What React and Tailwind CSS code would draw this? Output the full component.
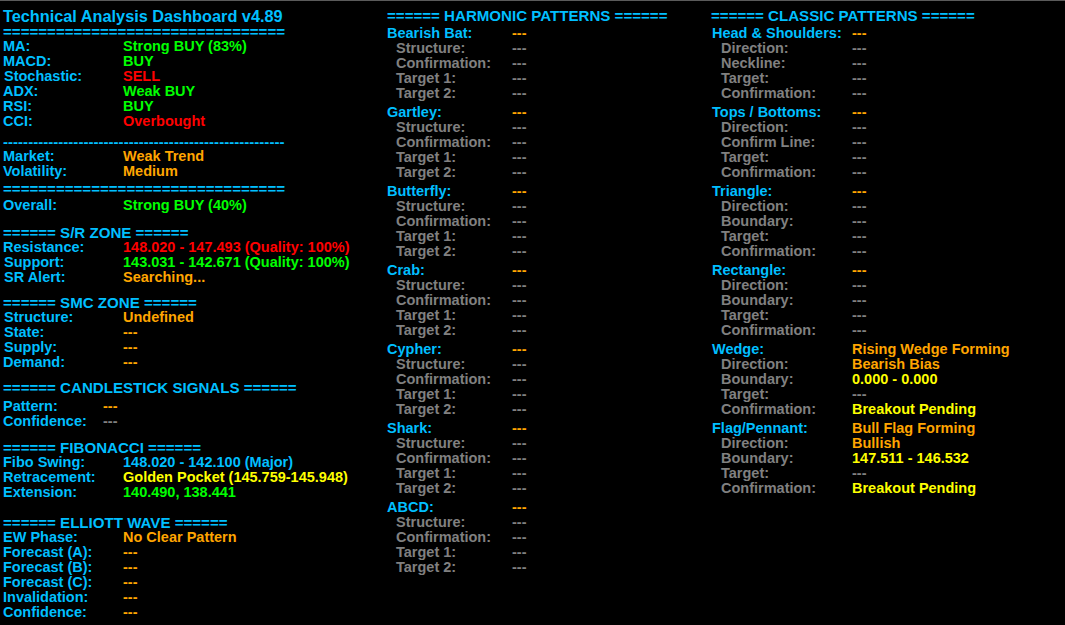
import React from 'react';

const CYAN = 'text-[#00bfff]';
const GRAY = 'text-[#808080]';
const ORANGE = 'text-[#ffa500]';
const GREEN = 'text-[#00ff00]';
const RED = 'text-[#ff0000]';
const YELLOW = 'text-[#ffff00]';

const font = { fontFamily: '"Liberation Sans", Arial, sans-serif' };

const Header = ({ text, className = '' }) => (
  <div className={`h-[15px] leading-[15px] text-[15.1px] font-bold whitespace-nowrap ${CYAN} ${className}`}>{text}</div>
);

const Row = ({ label, value, color = ORANGE, labelW = 'w-[120px]', shift = false, className = '' }) => (
  <div className={`flex h-[15px] leading-[15px] text-[14.5px] font-bold whitespace-nowrap ${className}`}>
    <span className={`${labelW} shrink-0 ${CYAN} ${shift ? 'pl-px' : ''}`}>{label}</span>
    <span className={color}>{value}</span>
  </div>
);

const EQ = '='.repeat(32);
const DASH = '-'.repeat(56);

const harmonic = ['Bearish Bat:', 'Gartley:', 'Butterfly:', 'Crab:', 'Cypher:', 'Shark:', 'ABCD:'];
const harmonicSubs = ['Structure:', 'Confirmation:', 'Target 1:', 'Target 2:'];

const classic = [
  { name: 'Head & Shoulders:', value: '---', color: ORANGE, subs: [['Direction:', '---', GRAY], ['Neckline:', '---', GRAY], ['Target:', '---', GRAY], ['Confirmation:', '---', GRAY]] },
  { name: 'Tops / Bottoms:', value: '---', color: ORANGE, subs: [['Direction:', '---', GRAY], ['Confirm Line:', '---', GRAY], ['Target:', '---', GRAY], ['Confirmation:', '---', GRAY]] },
  { name: 'Triangle:', value: '---', color: ORANGE, subs: [['Direction:', '---', GRAY], ['Boundary:', '---', GRAY], ['Target:', '---', GRAY], ['Confirmation:', '---', GRAY]] },
  { name: 'Rectangle:', value: '---', color: ORANGE, subs: [['Direction:', '---', GRAY], ['Boundary:', '---', GRAY], ['Target:', '---', GRAY], ['Confirmation:', '---', GRAY]] },
  { name: 'Wedge:', value: 'Rising Wedge Forming', color: ORANGE, subs: [['Direction:', 'Bearish Bias', ORANGE], ['Boundary:', '0.000 - 0.000', YELLOW], ['Target:', '---', GRAY], ['Confirmation:', 'Breakout Pending', YELLOW]] },
  { name: 'Flag/Pennant:', value: 'Bull Flag Forming', color: ORANGE, subs: [['Direction:', 'Bullish', ORANGE], ['Boundary:', '147.511 - 146.532', YELLOW], ['Target:', '---', GRAY], ['Confirmation:', 'Breakout Pending', YELLOW]] },
];

const PatternGroup = ({ name, value, color, subs, nameW, subW, first }) => (
  <div className={first ? 'mt-[3px]' : 'mt-[4px]'}>
    <div className="flex h-[15px] leading-[15px] text-[14.5px] font-bold whitespace-nowrap">
      <span className={`${nameW} shrink-0 ${CYAN}`}>{name}</span>
      <span className={color}>{value}</span>
    </div>
    {subs.map(([l, v, c]) => (
      <div key={l} className="flex h-[15px] leading-[15px] text-[14.5px] font-bold whitespace-nowrap pl-[9px]">
        <span className={`${subW} shrink-0 ${GRAY}`}>{l}</span>
        <span className={c}>{v}</span>
      </div>
    ))}
  </div>
);

export default function App() {
  return (
    <div style={font} className="w-full h-[625px] bg-black border-t border-[#5a5a5a] overflow-hidden flex">
      {/* left column */}
      <div className="w-[387px] shrink-0 pl-[3px] pt-[6px] flex flex-col">
        <div className={`h-[18px] leading-[18px] text-[16.3px] font-bold whitespace-nowrap ${CYAN}`}>Technical Analysis Dashboard v4.89</div>
        <Header text={EQ} className="-mt-px" />
        <Row label="MA:" value="Strong BUY (83%)" color={GREEN} />
        <Row label="MACD:" value="BUY" color={GREEN} />
        <Row label="Stochastic:" value="SELL" color={RED} shift />
        <Row label="ADX:" value="Weak BUY" color={GREEN} />
        <Row label="RSI:" value="BUY" color={GREEN} />
        <Row label="CCI:" value="Overbought" color={RED} />
        <Header text={DASH} className="mt-[5px]" />
        <Row label="Market:" value="Weak Trend" />
        <Row label="Volatility:" value="Medium" />
        <Header text={EQ} className="mt-[2px]" />
        <Row label="Overall:" value="Strong BUY (40%)" color={GREEN} className="mt-[2px]" />

        <Header text="====== S/R ZONE ======" className="mt-[12px]" />
        <Row label="Resistance:" value="148.020 - 147.493 (Quality: 100%)" color={RED} />
        <Row label="Support:" value="143.031 - 142.671 (Quality: 100%)" color={GREEN} shift />
        <Row label="SR Alert:" value="Searching..." shift />

        <Header text="====== SMC ZONE ======" className="mt-[10px]" />
        <Row label="Structure:" value="Undefined" shift />
        <Row label="State:" value="---" shift />
        <Row label="Supply:" value="---" shift />
        <Row label="Demand:" value="---" />

        <Header text="====== CANDLESTICK SIGNALS ======" className="mt-[10px]" />
        <Row label="Pattern:" value="---" labelW="w-[100px]" className="mt-[4px]" />
        <Row label="Confidence:" value="---" color={GRAY} labelW="w-[100px]" />

        <Header text="====== FIBONACCI ======" className="mt-[11px]" />
        <Row label="Fibo Swing:" value="148.020 - 142.100 (Major)" color={CYAN} />
        <Row label="Retracement:" value="Golden Pocket (145.759-145.948)" color={YELLOW} />
        <Row label="Extension:" value="140.490, 138.441" color={GREEN} />

        <Header text="====== ELLIOTT WAVE ======" className="mt-[15px]" />
        <Row label="EW Phase:" value="No Clear Pattern" />
        <Row label="Forecast (A):" value="---" />
        <Row label="Forecast (B):" value="---" />
        <Row label="Forecast (C):" value="---" />
        <Row label="Invalidation:" value="---" />
        <Row label="Confidence:" value="---" />
      </div>

      {/* harmonic column */}
      <div className="w-[324px] shrink-0 pt-[7px] flex flex-col">
        <Header text="====== HARMONIC PATTERNS ======" />
        {harmonic.map((h, i) => (
          <PatternGroup
            key={h}
            first={i === 0}
            name={h}
            value="---"
            color={ORANGE}
            subs={harmonicSubs.map((s) => [s, '---', GRAY])}
            nameW="w-[125px]"
            subW="w-[116px]"
          />
        ))}
      </div>

      {/* classic column */}
      <div className="flex-1 pt-[7px] flex flex-col">
        <Header text="====== CLASSIC PATTERNS ======" />
        <div className="pl-px">
          {classic.map((c, i) => (
            <PatternGroup key={c.name} first={i === 0} {...c} nameW="w-[140px]" subW="w-[131px]" />
          ))}
        </div>
      </div>
    </div>
  );
}
